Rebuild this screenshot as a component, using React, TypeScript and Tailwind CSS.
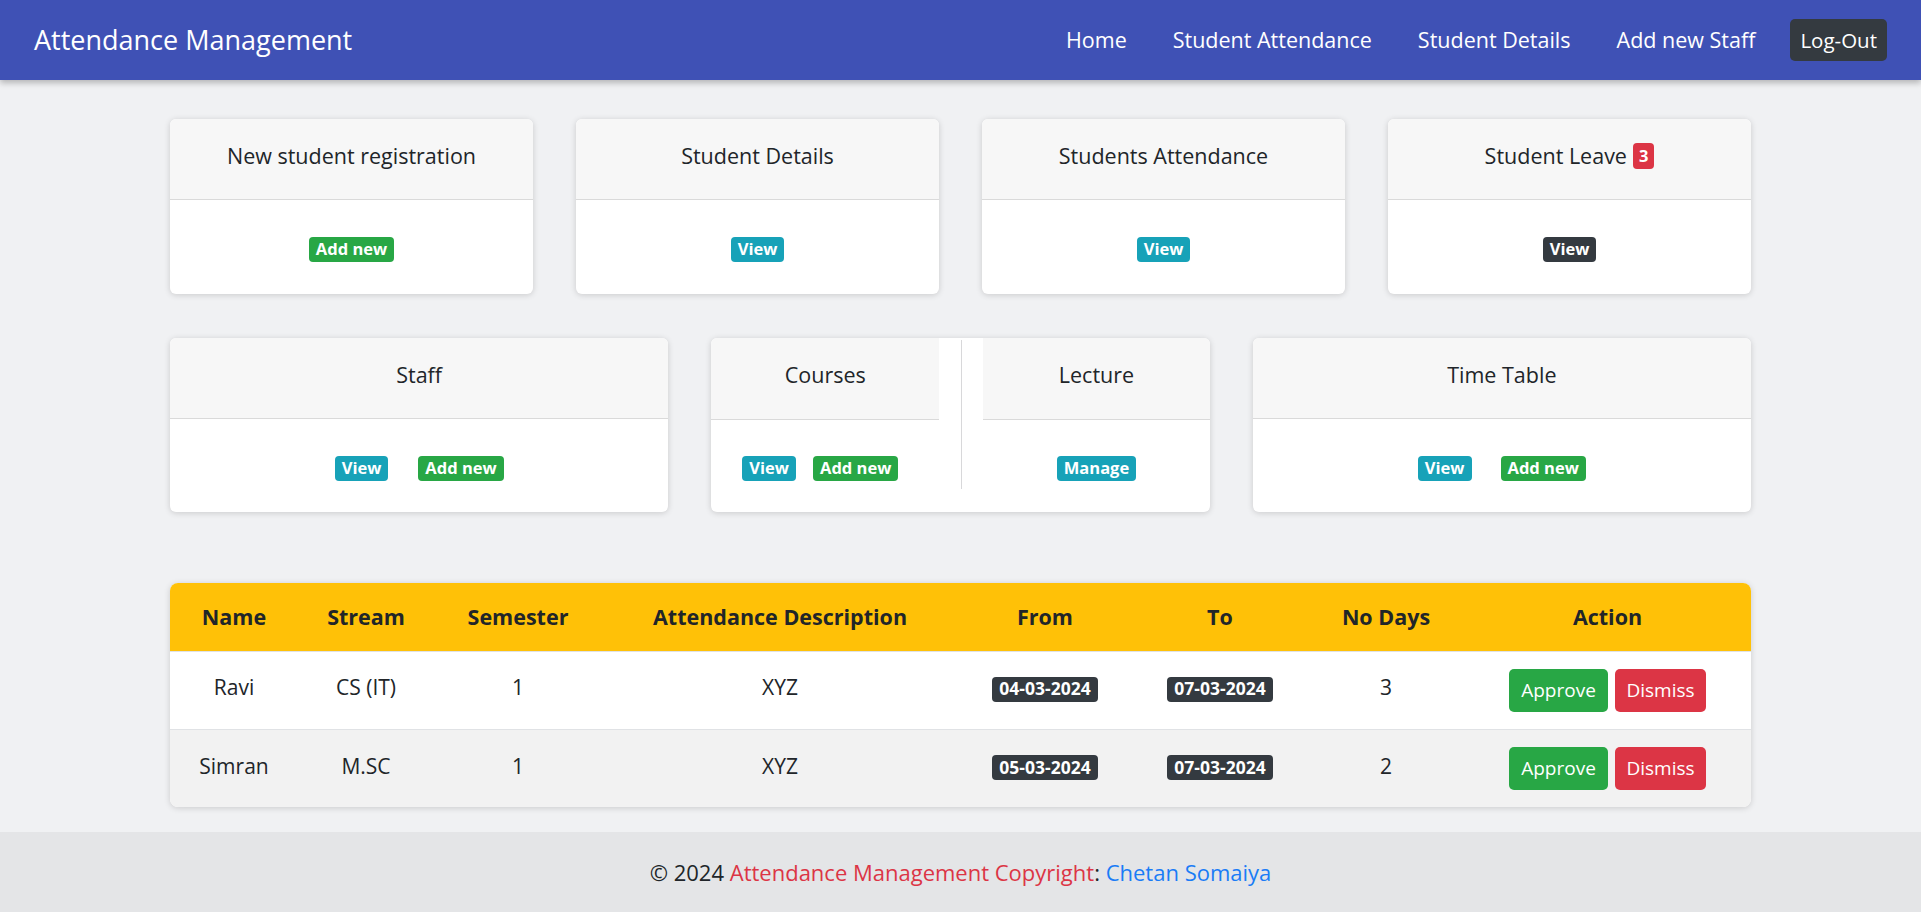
import React from "react";

const FONT = { fontFamily: '"Open Sans", "Noto Sans", sans-serif' };

function Badge({ color, children }: { color: string; children: React.ReactNode }) {
  return (
    <span
      className={`inline-flex items-center justify-center h-[25px] px-[7px] rounded-[4px] text-[16.5px] font-bold text-white leading-none ${color}`}
    >
      {children}
    </span>
  );
}

function Card({ title, children }: { title: React.ReactNode; children: React.ReactNode }) {
  return (
    <div className="bg-white rounded-[6px] shadow-[0_1px_6px_rgba(0,0,0,0.16)] overflow-hidden flex flex-col">
      <div className="h-[81px] bg-[#f7f7f7] border-b border-[#dadada] flex items-center justify-center pb-[6px] text-[21.5px] text-[#212529]">
        {title}
      </div>
      <div className="flex-1 flex items-center justify-center pt-[5px]">{children}</div>
    </div>
  );
}

const rows = [
  { name: "Ravi", stream: "CS (IT)", sem: "1", desc: "XYZ", from: "04-03-2024", to: "07-03-2024", days: "3", bg: "bg-white" },
  { name: "Simran", stream: "M.SC", sem: "1", desc: "XYZ", from: "05-03-2024", to: "07-03-2024", days: "2", bg: "bg-[#f2f2f2]" },
];

function DateBadge({ children }: { children: React.ReactNode }) {
  return (
    <span className="inline-flex items-center h-[25px] px-[7px] rounded-[4px] bg-[#343a40] text-white text-[17.5px] font-bold leading-none">
      {children}
    </span>
  );
}

export default function App() {
  return (
    <div className="h-[912px] overflow-hidden bg-[#f0f1f3] flex flex-col" style={FONT}>
      <nav className="h-[80px] shrink-0 bg-[#3f51b5] shadow-[0_3px_6px_rgba(0,0,0,0.25)] flex items-center px-[34px] relative z-10">
        <span className="text-white text-[27px]">Attendance Management</span>
        <div className="ml-auto flex items-center text-white text-[21.5px]">
          <span>Home</span>
          <span className="ml-[46px]">Student Attendance</span>
          <span className="ml-[46px]">Student Details</span>
          <span className="ml-[46px]">Add new Staff</span>
          <span className="ml-[35px] h-[42px] px-[10px] flex items-center rounded-[5px] bg-[#343a40] text-[20.5px]">Log-Out</span>
        </div>
      </nav>

      <main className="w-[1581px] mx-auto flex-1 pt-[39px]">
        <div className="grid grid-cols-4 gap-[43px] h-[175px]">
          <Card title="New student registration">
            <Badge color="bg-[#28a745]">Add new</Badge>
          </Card>
          <Card title="Student Details">
            <Badge color="bg-[#17a2b8]">View</Badge>
          </Card>
          <Card title="Students Attendance">
            <Badge color="bg-[#17a2b8]">View</Badge>
          </Card>
          <Card
            title={
              <span className="flex items-center gap-[6px]">
                Student Leave
                <span className="inline-flex items-center justify-center h-[26px] px-[6px] rounded-[4px] bg-[#dc3545] text-white text-[16.5px] font-bold leading-none">
                  3
                </span>
              </span>
            }
          >
            <Badge color="bg-[#343a40]">View</Badge>
          </Card>
        </div>

        <div className="grid grid-cols-3 gap-[43px] h-[174px] mt-[44px]">
          <Card title="Staff">
            <div className="flex items-center gap-[30px]">
              <Badge color="bg-[#17a2b8]">View</Badge>
              <Badge color="bg-[#28a745]">Add new</Badge>
            </div>
          </Card>

          <div className="bg-white rounded-[6px] shadow-[0_1px_6px_rgba(0,0,0,0.16)] flex">
            <div className="w-[228px] flex flex-col">
              <div className="h-[82px] bg-[#f7f7f7] rounded-tl-[6px] border-b border-[#dadada] flex items-center justify-center pb-[6px] text-[21.5px] text-[#212529]">
                Courses
              </div>
              <div className="flex-1 flex items-center justify-center gap-[17px] pr-[10px] pt-[5px]">
                <Badge color="bg-[#17a2b8]">View</Badge>
                <Badge color="bg-[#28a745]">Add new</Badge>
              </div>
            </div>
            <div className="w-[44px] flex justify-center pt-[2px] pb-[23px]">
              <div className="w-px bg-[#d8d8da]" />
            </div>
            <div className="flex-1 flex flex-col">
              <div className="h-[82px] bg-[#f7f7f7] rounded-tr-[6px] border-b border-[#dadada] flex items-center justify-center pb-[6px] text-[21.5px] text-[#212529]">
                Lecture
              </div>
              <div className="flex-1 flex items-center justify-center pt-[5px]">
                <Badge color="bg-[#17a2b8]">Manage</Badge>
              </div>
            </div>
          </div>

          <Card title="Time Table">
            <div className="flex items-center gap-[29px]">
              <Badge color="bg-[#17a2b8]">View</Badge>
              <Badge color="bg-[#28a745]">Add new</Badge>
            </div>
          </Card>
        </div>

        <div className="mt-[71px] bg-white rounded-[8px] shadow-[0_1px_6px_rgba(0,0,0,0.16)] overflow-hidden">
          <table className="w-full table-fixed border-collapse text-[#212529]">
            <colgroup>
              <col className="w-[128px]" />
              <col className="w-[136px]" />
              <col className="w-[168px]" />
              <col className="w-[356px]" />
              <col className="w-[174px]" />
              <col className="w-[176px]" />
              <col className="w-[156px]" />
              <col />
            </colgroup>
            <thead>
              <tr className="h-[68px] bg-[#ffc107] text-[21.5px] font-bold">
                <th className="font-bold">Name</th>
                <th className="font-bold">Stream</th>
                <th className="font-bold">Semester</th>
                <th className="font-bold">Attendance Description</th>
                <th className="font-bold">From</th>
                <th className="font-bold">To</th>
                <th className="font-bold">No Days</th>
                <th className="font-bold">Action</th>
              </tr>
            </thead>
            <tbody>
              {rows.map((r, i) => (
                <tr key={i} className={`h-[78px] ${r.bg} border-t border-[#e0e2e5] text-[21px] text-center`}>
                  <td className="pb-[4px]">{r.name}</td>
                  <td className="pb-[4px]">{r.stream}</td>
                  <td className="pb-[4px]">{r.sem}</td>
                  <td className="pb-[4px]">{r.desc}</td>
                  <td className="pb-[4px]">
                    <DateBadge>{r.from}</DateBadge>
                  </td>
                  <td className="pb-[4px]">
                    <DateBadge>{r.to}</DateBadge>
                  </td>
                  <td className="pb-[4px]">{r.days}</td>
                  <td>
                    <div className="flex items-center justify-center gap-[7px]">
                      <span className="h-[43px] w-[99px] flex items-center justify-center rounded-[5px] bg-[#28a745] text-white text-[19px]">
                        Approve
                      </span>
                      <span className="h-[43px] w-[91px] flex items-center justify-center rounded-[5px] bg-[#dc3545] text-white text-[19px]">
                        Dismiss
                      </span>
                    </div>
                  </td>
                </tr>
              ))}
            </tbody>
          </table>
        </div>
      </main>

      <footer className="h-[80px] shrink-0 bg-[#e4e5e7] flex items-center justify-center text-[22px] text-[#212529]">
        <span>
          © 2024 <span className="text-[#dc3545]">Attendance Management Copyright</span>:{" "}
          <span className="text-[#1a7cf6]">Chetan Somaiya</span>
        </span>
      </footer>
    </div>
  );
}
